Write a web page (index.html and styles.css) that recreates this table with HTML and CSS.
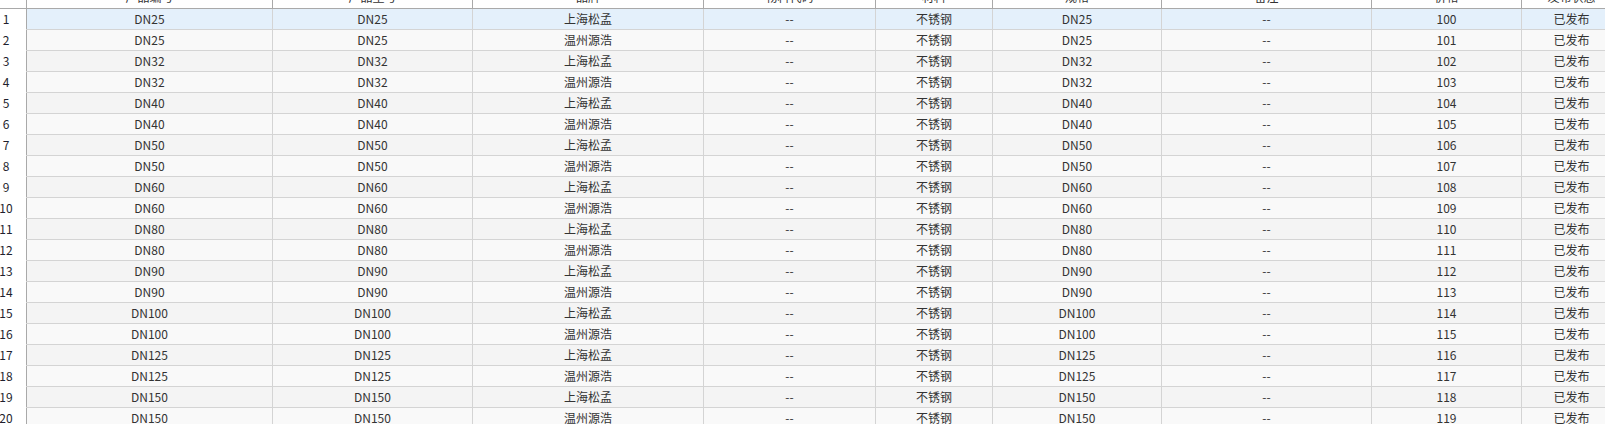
FILE: index.html
```html
<!DOCTYPE html>
<html lang="zh-CN">
<head>
<meta charset="utf-8">
<title>产品列表</title>
<link rel="stylesheet" href="styles.css">
</head>
<body>
<div class="grid">
  <div class="row head">
    <div class="cell num"></div>
    <div class="cell">产品编号</div>
    <div class="cell">产品型号</div>
    <div class="cell">品牌</div>
    <div class="cell">物料代码</div>
    <div class="cell">材料</div>
    <div class="cell">规格</div>
    <div class="cell">备注</div>
    <div class="cell">价格</div>
    <div class="cell">发布状态</div>
  </div>
  <div class="row selected"><div class="cell num">1</div><div class="cell">DN25</div><div class="cell">DN25</div><div class="cell">上海松孟</div><div class="cell">--</div><div class="cell">不锈钢</div><div class="cell">DN25</div><div class="cell">--</div><div class="cell">100</div><div class="cell">已发布</div></div>
  <div class="row even"><div class="cell num">2</div><div class="cell">DN25</div><div class="cell">DN25</div><div class="cell">温州源浩</div><div class="cell">--</div><div class="cell">不锈钢</div><div class="cell">DN25</div><div class="cell">--</div><div class="cell">101</div><div class="cell">已发布</div></div>
  <div class="row odd"><div class="cell num">3</div><div class="cell">DN32</div><div class="cell">DN32</div><div class="cell">上海松孟</div><div class="cell">--</div><div class="cell">不锈钢</div><div class="cell">DN32</div><div class="cell">--</div><div class="cell">102</div><div class="cell">已发布</div></div>
  <div class="row even"><div class="cell num">4</div><div class="cell">DN32</div><div class="cell">DN32</div><div class="cell">温州源浩</div><div class="cell">--</div><div class="cell">不锈钢</div><div class="cell">DN32</div><div class="cell">--</div><div class="cell">103</div><div class="cell">已发布</div></div>
  <div class="row odd"><div class="cell num">5</div><div class="cell">DN40</div><div class="cell">DN40</div><div class="cell">上海松孟</div><div class="cell">--</div><div class="cell">不锈钢</div><div class="cell">DN40</div><div class="cell">--</div><div class="cell">104</div><div class="cell">已发布</div></div>
  <div class="row even"><div class="cell num">6</div><div class="cell">DN40</div><div class="cell">DN40</div><div class="cell">温州源浩</div><div class="cell">--</div><div class="cell">不锈钢</div><div class="cell">DN40</div><div class="cell">--</div><div class="cell">105</div><div class="cell">已发布</div></div>
  <div class="row odd"><div class="cell num">7</div><div class="cell">DN50</div><div class="cell">DN50</div><div class="cell">上海松孟</div><div class="cell">--</div><div class="cell">不锈钢</div><div class="cell">DN50</div><div class="cell">--</div><div class="cell">106</div><div class="cell">已发布</div></div>
  <div class="row even"><div class="cell num">8</div><div class="cell">DN50</div><div class="cell">DN50</div><div class="cell">温州源浩</div><div class="cell">--</div><div class="cell">不锈钢</div><div class="cell">DN50</div><div class="cell">--</div><div class="cell">107</div><div class="cell">已发布</div></div>
  <div class="row odd"><div class="cell num">9</div><div class="cell">DN60</div><div class="cell">DN60</div><div class="cell">上海松孟</div><div class="cell">--</div><div class="cell">不锈钢</div><div class="cell">DN60</div><div class="cell">--</div><div class="cell">108</div><div class="cell">已发布</div></div>
  <div class="row even"><div class="cell num">10</div><div class="cell">DN60</div><div class="cell">DN60</div><div class="cell">温州源浩</div><div class="cell">--</div><div class="cell">不锈钢</div><div class="cell">DN60</div><div class="cell">--</div><div class="cell">109</div><div class="cell">已发布</div></div>
  <div class="row odd"><div class="cell num">11</div><div class="cell">DN80</div><div class="cell">DN80</div><div class="cell">上海松孟</div><div class="cell">--</div><div class="cell">不锈钢</div><div class="cell">DN80</div><div class="cell">--</div><div class="cell">110</div><div class="cell">已发布</div></div>
  <div class="row even"><div class="cell num">12</div><div class="cell">DN80</div><div class="cell">DN80</div><div class="cell">温州源浩</div><div class="cell">--</div><div class="cell">不锈钢</div><div class="cell">DN80</div><div class="cell">--</div><div class="cell">111</div><div class="cell">已发布</div></div>
  <div class="row odd"><div class="cell num">13</div><div class="cell">DN90</div><div class="cell">DN90</div><div class="cell">上海松孟</div><div class="cell">--</div><div class="cell">不锈钢</div><div class="cell">DN90</div><div class="cell">--</div><div class="cell">112</div><div class="cell">已发布</div></div>
  <div class="row even"><div class="cell num">14</div><div class="cell">DN90</div><div class="cell">DN90</div><div class="cell">温州源浩</div><div class="cell">--</div><div class="cell">不锈钢</div><div class="cell">DN90</div><div class="cell">--</div><div class="cell">113</div><div class="cell">已发布</div></div>
  <div class="row odd"><div class="cell num">15</div><div class="cell">DN100</div><div class="cell">DN100</div><div class="cell">上海松孟</div><div class="cell">--</div><div class="cell">不锈钢</div><div class="cell">DN100</div><div class="cell">--</div><div class="cell">114</div><div class="cell">已发布</div></div>
  <div class="row even"><div class="cell num">16</div><div class="cell">DN100</div><div class="cell">DN100</div><div class="cell">温州源浩</div><div class="cell">--</div><div class="cell">不锈钢</div><div class="cell">DN100</div><div class="cell">--</div><div class="cell">115</div><div class="cell">已发布</div></div>
  <div class="row odd"><div class="cell num">17</div><div class="cell">DN125</div><div class="cell">DN125</div><div class="cell">上海松孟</div><div class="cell">--</div><div class="cell">不锈钢</div><div class="cell">DN125</div><div class="cell">--</div><div class="cell">116</div><div class="cell">已发布</div></div>
  <div class="row even"><div class="cell num">18</div><div class="cell">DN125</div><div class="cell">DN125</div><div class="cell">温州源浩</div><div class="cell">--</div><div class="cell">不锈钢</div><div class="cell">DN125</div><div class="cell">--</div><div class="cell">117</div><div class="cell">已发布</div></div>
  <div class="row odd"><div class="cell num">19</div><div class="cell">DN150</div><div class="cell">DN150</div><div class="cell">上海松孟</div><div class="cell">--</div><div class="cell">不锈钢</div><div class="cell">DN150</div><div class="cell">--</div><div class="cell">118</div><div class="cell">已发布</div></div>
  <div class="row even"><div class="cell num">20</div><div class="cell">DN150</div><div class="cell">DN150</div><div class="cell">温州源浩</div><div class="cell">--</div><div class="cell">不锈钢</div><div class="cell">DN150</div><div class="cell">--</div><div class="cell">119</div><div class="cell">已发布</div></div>
</div>
</body>
</html>
```

FILE: styles.css
```css
html, body {
  margin: 0;
  padding: 0;
  background: #ffffff;
  overflow: hidden;
}

body {
  font-family: "Noto Sans CJK SC", "Noto Sans", sans-serif;
  font-size: 12px;
  color: #333333;
}

.grid {
  margin-top: -14px;
  margin-left: -14px;
  width: 1636px;
}

.row {
  display: grid;
  grid-template-columns: 41px 246px 200px 231px 172px 117px 169px 210px 150px 100px;
  height: 21px;
}

.cell {
  box-sizing: border-box;
  border-right: 1px solid #d4d4d4;
  border-bottom: 1px solid #d4d4d4;
  line-height: 20px;
  text-align: center;
  white-space: nowrap;
  overflow: hidden;
}

.cell.num {
  background: #ffffff;
  border-right-color: #a9a9a9;
  border-bottom-color: #ffffff;
  color: #1f1f2e;
}

.head {
  height: 23px;
}

.head .cell {
  line-height: 22px;
  background: #ffffff;
  border-right-color: #a9a9a9;
  border-bottom-color: #a9a9a9;
}

.head .cell.num {
  border-bottom-color: #a9a9a9;
}

.selected .cell {
  background: #e4f0fb;
}

.even .cell {
  background: #f9f9f9;
}

.odd .cell {
  background: #f4f4f4;
}

.row .cell.num {
  background: #ffffff;
}
```
